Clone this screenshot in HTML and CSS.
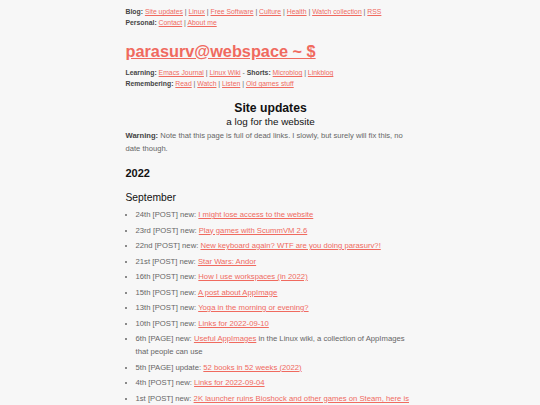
FILE: index.html
```html
<!DOCTYPE html>
<html>
<head>
<meta charset="utf-8">
<link rel="stylesheet" href="styles.css">
</head>
<body>
<div class="page">
  <nav class="topnav">
    <div><b>Blog:</b> <a href="#">Site updates</a> | <a href="#">Linux</a> | <a href="#">Free Software</a> | <a href="#">Culture</a> | <a href="#">Health</a> | <a href="#">Watch collection</a> | <a href="#">RSS</a></div>
    <div><b>Personal:</b> <a href="#">Contact</a> | <a href="#">About me</a></div>
  </nav>
  <header class="brand">
    <a class="title" href="#">parasurv@webspace ~ $</a>
  </header>
  <nav class="subnav">
    <div><b>Learning:</b> <a href="#">Emacs Journal</a> | <a href="#">Linux Wiki</a> - <b>Shorts:</b> <a href="#">Microblog</a> | <a href="#">Linkblog</a></div>
    <div><b>Remembering:</b> <a href="#">Read</a> | <a href="#">Watch</a> | <a href="#">Listen</a> | <a href="#">Old games stuff</a></div>
  </nav>
  <main>
    <h1 class="ptitle">Site updates</h1>
    <p class="subtitle">a log for the website</p>
    <p class="warning"><b>Warning:</b> Note that this page is full of dead links. I slowly, but surely will fix this, no date though.</p>
    <h2 class="year">2022</h2>
    <h3 class="month">September</h3>
    <ul class="log">
      <li>24th [POST] new: <a href="#">I might lose access to the website</a></li>
      <li>23rd [POST] new: <a href="#">Play games with ScummVM 2.6</a></li>
      <li>22nd [POST] new: <a href="#">New keyboard again? WTF are you doing parasurv?!</a></li>
      <li>21st [POST] new: <a href="#">Star Wars: Andor</a></li>
      <li>16th [POST] new: <a href="#">How I use workspaces (in 2022)</a></li>
      <li>15th [POST] new: <a href="#">A post about AppImage</a></li>
      <li>13th [POST] new: <a href="#">Yoga in the morning or evening?</a></li>
      <li>10th [POST] new: <a href="#">Links for 2022-09-10</a></li>
      <li>6th [PAGE] new: <a href="#">Useful AppImages</a> in the Linux wiki, a collection of AppImages that people can use</li>
      <li>5th [PAGE] update: <a href="#">52 books in 52 weeks (2022)</a></li>
      <li>4th [POST] new: <a href="#">Links for 2022-09-04</a></li>
      <li>1st [POST] new: <a href="#">2K launcher ruins Bioshock and other games on Steam, here is what you can do</a></li>
    </ul>
  </main>
</div>
</body>
</html>
```

FILE: styles.css
```css
html, body {
  margin: 0;
  padding: 0;
  background: #f7f7f7;
}
body {
  font-family: "Liberation Sans", Arial, sans-serif;
  color: #666;
  font-size: 7.7px;
  line-height: 13px;
}
b {
  color: #444;
}
a {
  color: #f06a5f;
  text-decoration: underline;
}
.page {
  width: 290px;
  margin: 0 auto;
  padding: 6px 0 0 1px;
}
.topnav {
  font-size: 6.85px;
  line-height: 11px;
}
.brand {
  margin-top: 9px;
  line-height: 28px;
}
.title {
  font-size: 16.3px;
  font-weight: bold;
}
.subnav {
  font-size: 6.85px;
  line-height: 11px;
  margin-top: -2px;
}
.ptitle {
  text-align: center;
  font-size: 12.2px;
  line-height: 16px;
  color: #111;
  margin: 11px 0 0;
}
.subtitle {
  text-align: center;
  font-size: 9.9px;
  line-height: 14px;
  color: #111;
  margin: -1px 0 0;
}
.warning {
  margin: 0;
  font-size: 7.6px;
}
.year {
  font-size: 11px;
  color: #111;
  margin: 10px 0 0;
  line-height: 16px;
}
.month {
  font-size: 10.3px;
  font-weight: normal;
  color: #111;
  margin: 9px 0 0;
  line-height: 16px;
}
.log {
  margin: 2px 0 0;
  padding-left: 10px;
}
.log li {
  margin-bottom: 2.5px;
}
```
